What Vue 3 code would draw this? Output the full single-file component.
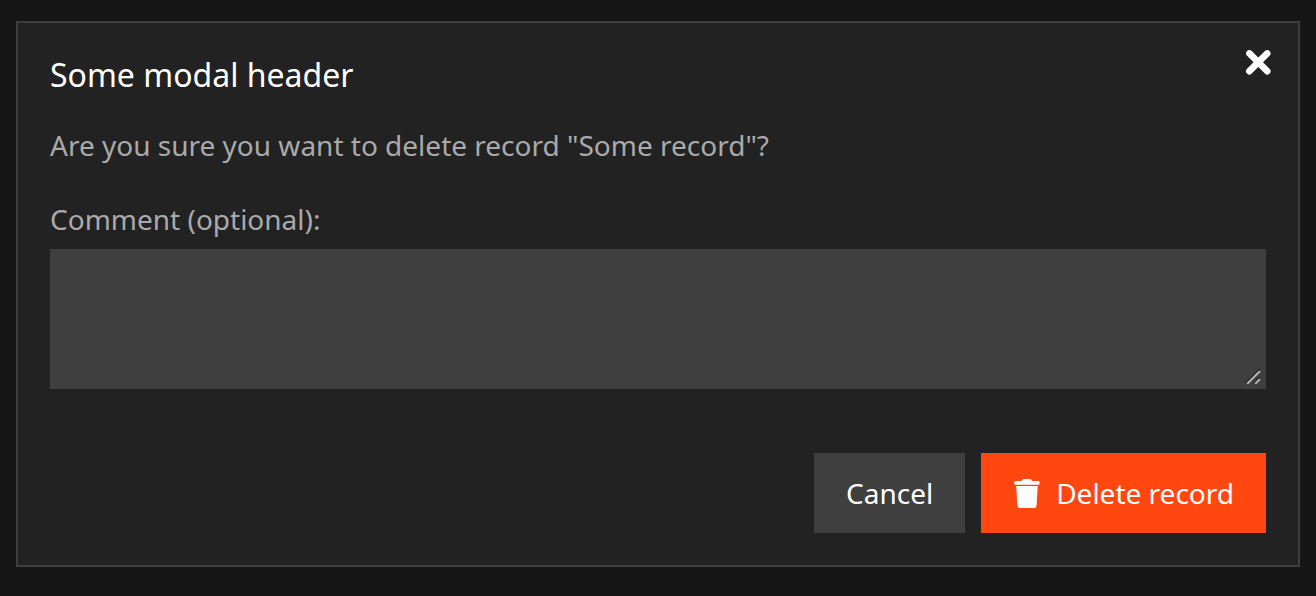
<script setup>
import { ref } from 'vue'

const comment = ref('')
</script>

<template>
  <div class="backdrop">
    <section class="modal" role="dialog" aria-labelledby="modal-title">
      <header class="head">
        <h1 id="modal-title">Some modal header</h1>
        <button class="close" type="button" aria-label="Close">
          <svg viewBox="0 0 28 28" aria-hidden="true">
            <path d="M5.400 4.400 23.200 22.200M23.200 4.400 5.400 22.200" />
          </svg>
        </button>
      </header>
      <p class="question">Are you sure you want to delete record "Some record"?</p>
      <label for="comment">Comment (optional):</label>
      <div class="field">
        <textarea id="comment" v-model="comment"></textarea>
        <svg class="grip" viewBox="0 0 16 16" aria-hidden="true">
          <path class="shade" d="M0.500 14 14 0.500M8.500 14 14 8.500" />
          <path class="light" d="M1.200 14.800 14 2M9.200 14.800 14 10" />
        </svg>
      </div>
      <footer class="actions">
        <button class="btn" type="button">Cancel</button>
        <button class="btn danger" type="button">
          <svg viewBox="0 0 27 30" aria-hidden="true">
            <path d="M2.200 3H8.500L9.300 1.800Q9.800 1 10.800 1H16.800Q17.800 1 18.400 1.800L19.200 3H25.600Q26.500 3 26.500 3.900V5.800Q26.500 6.700 25.600 6.700H2.200Q1.300 6.700 1.300 5.800V3.900Q1.300 3 2.200 3ZM3.200 7.900H24.700L23.600 27.400Q23.400 29.900 21 29.900H7Q4.600 29.900 4.400 27.400Z" />
          </svg>
          <span>Delete record</span>
        </button>
      </footer>
    </section>
  </div>
</template>

<style>
body {
  background: #161616;
}
</style>

<style scoped>
.backdrop {
  box-sizing: border-box;
  min-height: 100vh;
  padding: 21px 16px 29px;
  background: #161616;
  font-family: "Noto Sans", "Open Sans", sans-serif;
  font-size: 28px;
  line-height: 40px;
  color: #aaa;
}
.modal {
  padding: 32px;
  border: 2px solid #3f3f3f;
  background: #222;
}
.head {
  display: flex;
  justify-content: space-between;
  align-items: flex-start;
}
h1 {
  margin: 0;
  color: #fff;
  font-size: 32px;
  line-height: 40px;
  font-weight: 400;
}
.close {
  display: flex;
  margin: -6px -6px 0 0;
  padding: 0;
  border: 0;
  background: none;
}
.close svg {
  width: 28px;
  height: 28px;
  fill: none;
  stroke: #fff;
  stroke-width: 6.6;
  stroke-linecap: round;
}
.question {
  margin: 30px 0 34px;
}
label {
  display: block;
}
.field {
  position: relative;
  margin-top: 10px;
}
textarea {
  display: block;
  box-sizing: border-box;
  width: 100%;
  height: 140px;
  padding: 16px;
  border: 0;
  background: #3f3f3f;
  color: #fff;
  font: inherit;
  resize: none;
}
.grip {
  position: absolute;
  right: 4px;
  bottom: 4px;
  width: 16px;
  height: 16px;
  fill: none;
  pointer-events: none;
}
.shade {
  stroke: #1c1c1c;
  stroke-width: 2;
}
.light {
  stroke: #b4b4b4;
  stroke-width: 2;
}
.actions {
  display: flex;
  justify-content: flex-end;
  gap: 16px;
  margin-top: 64px;
}
.btn {
  display: flex;
  align-items: center;
  gap: 16px;
  padding: 20px 32px;
  border: 0;
  background: #3f3f3f;
  color: #fff;
  font: inherit;
}
.danger {
  background: #ff470f;
}
.danger svg {
  width: 27px;
  height: 30px;
  fill: #fff;
}
</style>
